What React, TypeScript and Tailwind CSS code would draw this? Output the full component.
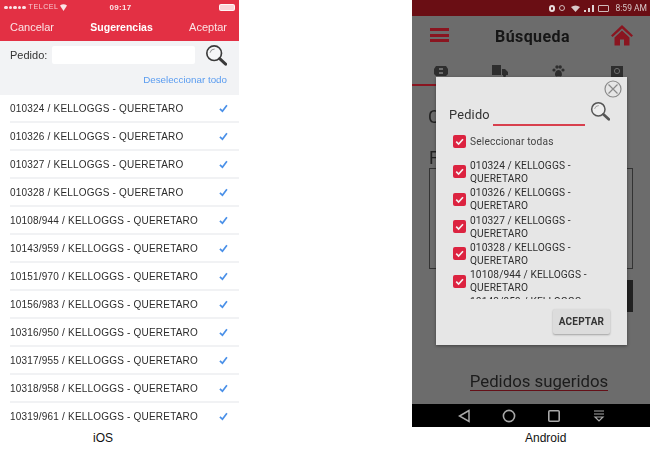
const codes = ["010324", "010326", "010327", "010328", "10108/944", "10143/959", "10151/970", "10156/983", "10316/950", "10317/955", "10318/958", "10319/961"];
const androidCodes = ["010324", "010326", "010327", "010328", "10108/944", "10143/959"];

function Magnifier({ size, color }: { size: number; color: string }) {
  return (
    <svg width={size} height={size} viewBox="0 0 24 24" fill="none">
      <circle cx="10" cy="10" r="8" stroke={color} strokeWidth="1.8" fill="#ffffff55" />
      <path d="M5.5 9.5a5 5 0 0 1 5-4" stroke={color} strokeWidth="1" opacity="0.6" />
      <path d="M16 16l6.5 6" stroke={color} strokeWidth="3.2" strokeLinecap="round" />
    </svg>
  );
}

function Tick() {
  return (
    <svg width="9" height="9" viewBox="0 0 10 10" fill="none">
      <path d="M1 5.5L3.8 8l5-6.5" stroke="#4a90e8" strokeWidth="1.9" />
    </svg>
  );
}

function RedCheck() {
  return (
    <div className="flex h-[13px] w-[13px] shrink-0 items-center justify-center rounded-[2px] bg-[#dc2340]">
      <svg width="11" height="11" viewBox="0 0 11 11" fill="none">
        <path d="M2.2 5.6L4.6 8l4.4-4.8" stroke="#f4f4f4" strokeWidth="1.6" />
      </svg>
    </div>
  );
}

function IOS() {
  return (
    <div className="flex h-[422px] w-[239px] shrink-0 flex-col overflow-hidden bg-[#f2f3f5] font-['Liberation_Sans',sans-serif] blur-[0.4px]">
      <div className="h-[41px] shrink-0 bg-[#e33044] text-[#f7ccd2]">
        <div className="flex h-[14px] items-center pl-[4px] pr-[4px] pt-[1px]">
          <div className="flex gap-[1px]">
            {[0, 1, 2, 3, 4].map((i) => (
              <div key={i} className="h-[3.5px] w-[3.5px] rounded-full bg-[#fbe4e6]" />
            ))}
          </div>
          <span className="ml-[3px] w-[31px] whitespace-nowrap text-[7px] tracking-[0.6px]">TELCEL</span>
          <svg width="7" height="7" viewBox="0 0 7 7"><path d="M0 1.5Q3.5-1 7 1.5L3.5 7z" fill="#fbe4e6" /></svg>
          <span className="ml-[43px] text-[8px] font-bold tracking-[0.3px] text-[#fbe4e6]">09:17</span>
          <div className="ml-auto h-[7px] w-[16px] rounded-[2px] border border-white/80 bg-white/80" />
        </div>
        <div className="flex h-[27px] items-center justify-between pl-[10px] pr-[12px] text-[11px] text-[#fbe4e6]">
          <span>Cancelar</span>
          <span className="text-[10.5px] font-bold text-white">Sugerencias</span>
          <span>Aceptar</span>
        </div>
      </div>
      <div className="flex h-[54px] shrink-0 flex-col pl-[10px] pr-[12px]">
        <div className="mt-[3px] flex items-center">
          <span className="text-[11px] text-[#333]">Pedido:</span>
          <div className="ml-[5px] h-[18px] w-[146px] rounded-[2px] bg-white" />
          <div className="ml-[10px] h-[22px]"><Magnifier size={22} color="#3a3a3a" /></div>
        </div>
        <div className="mt-[8px] self-end text-[9.8px] leading-[12px] text-[#5a9cf0]">Deseleccionar todo</div>
      </div>
      <div className="flex-1 bg-white">
        {codes.map((c) => (
          <div key={c} className="ml-[10px] flex h-[28px] items-center justify-between border-b-2 border-[#f1f2f4] pr-[11px] pt-[1px] text-[10px] tracking-[0.2px] text-[#2c2c2c]">
            <span className="whitespace-nowrap">{c} / KELLOGGS - QUERETARO</span>
            <Tick />
          </div>
        ))}
      </div>
    </div>
  );
}

function Android() {
  return (
    <div className="relative flex h-[427px] w-[238px] shrink-0 flex-col overflow-hidden bg-[#6c6c6c] font-['Roboto',sans-serif] blur-[0.4px]">
      <div className="flex h-[16px] shrink-0 items-center justify-end bg-[#6a0e14] pr-[3px] text-[8.5px] text-[#d8c8c8]">
        <span className="h-[7px] w-[6px] rounded-full border-2 border-[#e8dcdc]" />
        <span className="ml-[4px] h-[6px] w-[6px] rounded-full border border-[#d0bcbc]" />
        <svg className="ml-[6px]" width="9" height="7" viewBox="0 0 9 7"><path d="M0 2Q4.5-1 9 2L4.5 7z" fill="#d8c8c8" /></svg>
        <svg className="ml-[4px]" width="10" height="7" viewBox="0 0 10 7" fill="#e0d4d4">
          <rect x="0" y="5" width="2" height="2" /><rect x="4" y="3" width="2" height="4" /><rect x="8" y="0" width="2" height="7" />
        </svg>
        <span className="ml-[4px] h-[7px] w-[11px] rounded-[1px] border border-[#d0bcbc]" />
        <span className="ml-[7px] whitespace-nowrap">8:59 AM</span>
      </div>
      <div className="flex h-[38px] shrink-0 items-center justify-between pl-[18px] pr-[16px]">
        <div className="flex w-[19px] flex-col gap-[2.5px]">
          <div className="h-[3px] bg-[#8a1520]" />
          <div className="h-[3px] bg-[#8a1520]" />
          <div className="h-[3px] bg-[#8a1520]" />
        </div>
        <span className="ml-[6px] mt-[3px] text-[16px] font-bold tracking-[0.4px] text-[#161616]">Búsqueda</span>
        <svg width="24" height="22" viewBox="0 0 24 22">
          <path d="M12 1L1 11.5l1.6 1.6L12 4.4l9.4 8.7 1.6-1.6zM4.5 13.5V21.5h5.5v-6h4v6h5.5V13.5L12 6.5z" fill="#8a1520" />
        </svg>
      </div>
      <div className="flex h-[30px] shrink-0 items-start pl-[22px] pt-[11px]">
        <svg width="14" height="11" viewBox="0 0 14 11" fill="#2e2e2e"><path d="M2 1h10l2 3v5l-2 2H2L0 9V4zM5 3v2h4V3zM5 7v2h4V7z" /></svg>
        <svg className="ml-[44px]" width="16" height="12" viewBox="0 0 16 12" fill="#2e2e2e"><path d="M0 0h9v10H0zM10 4h3l3 3v3h-6z" /><circle cx="12.5" cy="10.5" r="1.5" /></svg>
        <svg className="ml-[44px]" width="13" height="12" viewBox="0 0 13 12" fill="#2e2e2e"><circle cx="2" cy="5" r="1.6" /><circle cx="5" cy="2" r="1.7" /><circle cx="8.2" cy="2" r="1.7" /><circle cx="11" cy="5" r="1.6" /><path d="M6.5 5C3.8 5 2.5 8.5 3.2 10.5c.6 1.5 2.3.8 3.3.8s2.7.7 3.3-.8C10.5 8.5 9.2 5 6.5 5z" /></svg>
        <svg className="ml-[46px]" width="12" height="12" viewBox="0 0 12 12"><path d="M0 1h12v11H0z" fill="#2e2e2e" /><circle cx="6" cy="6" r="2.6" fill="none" stroke="#6c6c6c" strokeWidth="1" /></svg>
      </div>
      <div className="h-[2px] w-[24px] shrink-0 bg-[#8a1520]" />
      <div className="mt-[18px] pl-[16px] text-[18px] leading-[26px] text-[#222]">C</div>
      <div className="mt-[15px] pl-[17px] text-[18px] leading-[26px] text-[#222]">F</div>
      <div className="mx-[17px] -mt-[3px] h-[101px] shrink-0 border border-[#333]" />
      <div className="ml-auto mr-[17px] mt-[11px] h-[32px] w-[7px] bg-[#222]" />
      <div className="mt-[58px] text-center">
        <span className="ml-[16px] inline-block border-b border-[#641018] text-[16.8px] leading-[18px] text-[#1c1c1c]">Pedidos sugeridos</span>
      </div>
      <div className="mt-auto flex h-[23px] shrink-0 items-center justify-center gap-[31px] bg-black">
        <svg width="14" height="14" viewBox="0 0 14 14" fill="none"><path d="M12 1.5L2.5 7l9.5 5.5z" stroke="#a8a8a8" strokeWidth="1.5" /></svg>
        <svg width="14" height="14" viewBox="0 0 14 14" fill="none"><circle cx="7" cy="7" r="5.6" stroke="#a8a8a8" strokeWidth="1.6" /></svg>
        <svg width="14" height="14" viewBox="0 0 14 14" fill="none"><rect x="1.8" y="1.8" width="10.4" height="10.4" rx="1" stroke="#a8a8a8" strokeWidth="1.6" /></svg>
        <svg width="14" height="14" viewBox="0 0 14 14" fill="none"><path d="M2 2h10M2 5h10M3 8h8l-4 4z" stroke="#a8a8a8" strokeWidth="1.2" /></svg>
      </div>

      <div className="absolute left-[24px] top-[77px] flex h-[268px] w-[191px] flex-col bg-[#e6e6e6] shadow-[0_1px_3px_rgba(0,0,0,0.4)]">
        <div className="flex h-[26px] justify-end pr-[5px] pt-[3px]">
          <svg width="18" height="18" viewBox="0 0 18 18" fill="none" stroke="#8a8a8a">
            <circle cx="9" cy="9" r="8" strokeWidth="1.2" />
            <path d="M4.5 4.5l9 9M13.5 4.5l-9 9" strokeWidth="1.2" />
          </svg>
        </div>
        <div className="flex h-[24px] items-start pl-[13px]">
          <span className="mt-[2px] text-[12.8px] leading-[20px] tracking-[0.2px] text-[#333]">Pedido</span>
          <div className="ml-[3px] mt-[21px] h-[1.5px] w-[92px] bg-[#d8404e]" />
          <div className="-mt-[2px] ml-[5px]"><Magnifier size={20} color="#555" /></div>
        </div>
        <div className="ml-[17px] mt-[7px] flex items-center gap-[4px] text-[10.2px] tracking-[0.15px] text-[#444]">
          <RedCheck />
          <span>Seleccionar todas</span>
        </div>
        <div className="mt-[9px] h-[141px] shrink-0 overflow-hidden">
          {androidCodes.map((c) => (
            <div key={c} className="ml-[17px] flex h-[27.3px] items-center gap-[4px]">
              <RedCheck />
              <span className="text-[10.2px] leading-[13px] tracking-[0.1px] text-[#2e2e2e]">
                {c} / KELLOGGS -<br />QUERETARO
              </span>
            </div>
          ))}
        </div>
        <div className="mt-[10px] flex justify-end pr-[17px]">
          <div className="flex h-[25px] w-[57px] items-center justify-center rounded-[2px] bg-[#dcdcdc] text-[10px] font-bold tracking-[0.2px] text-[#333] shadow-[0_1px_2px_rgba(0,0,0,0.3)]">ACEPTAR</div>
        </div>
      </div>
    </div>
  );
}

export default function App() {
  return (
    <div className="h-[450px] w-[650px] overflow-hidden bg-white font-['Liberation_Sans',sans-serif]">
      <div className="flex h-[427px] items-start justify-between">
        <IOS />
        <Android />
      </div>
      <div className="flex pt-[2px] text-[12px] text-[#111]">
        <span className="ml-[93px]">iOS</span>
        <span className="ml-[412px]">Android</span>
      </div>
    </div>
  );
}
